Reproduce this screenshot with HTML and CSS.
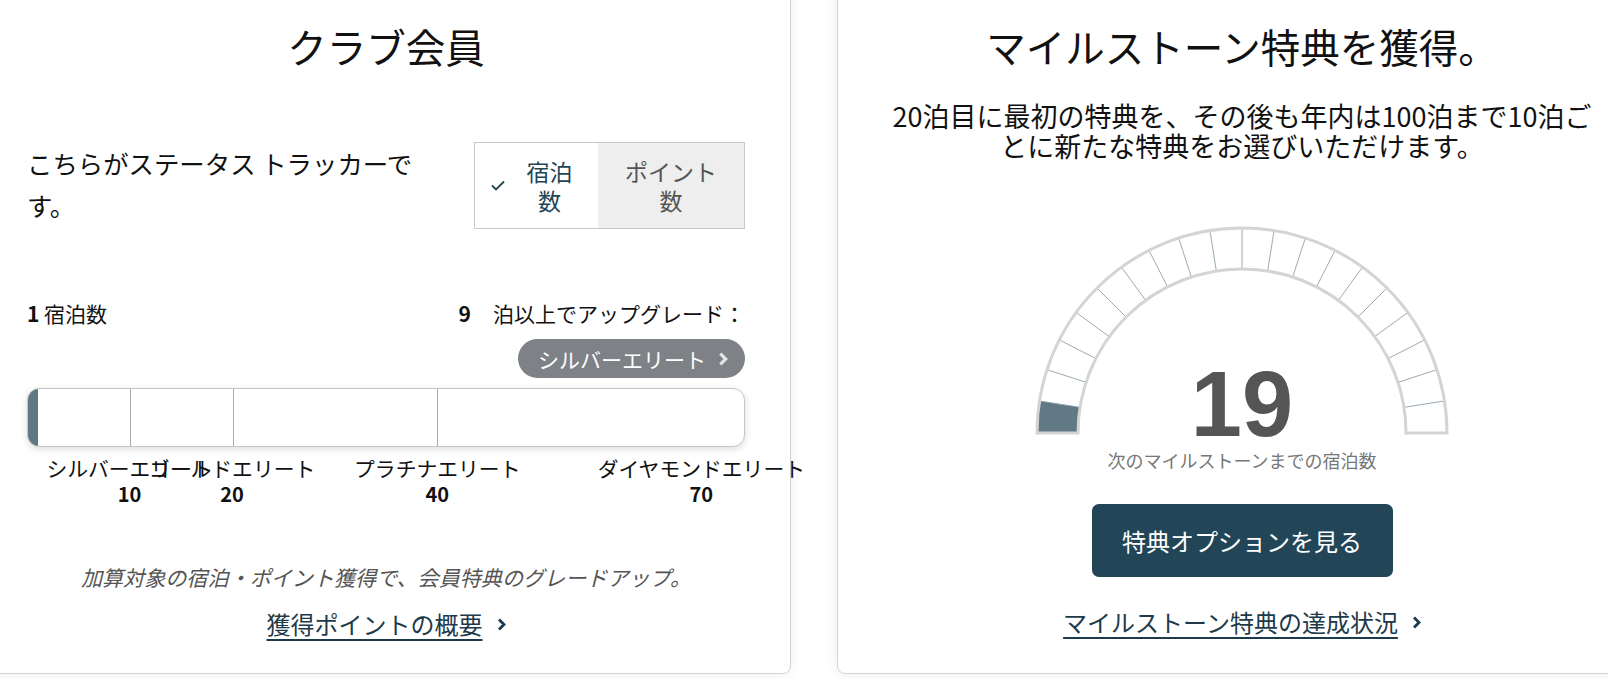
FILE: index.html
```html
<!DOCTYPE html>
<html lang="ja">
<head>
  <meta charset="UTF-8" />
  <meta name="viewport" content="width=device-width, initial-scale=1" />
  <title>クラブ会員</title>
  <link rel="stylesheet" href="styles.css">
</head>
<body>
  <div class="board">
    <!-- status tracker -->
    <section class="card">
      <h2 class="card-title">クラブ会員</h2>

      <div class="intro-row">
        <p class="intro-text">こちらがステータス トラッカーです。</p>
        <div class="toggle">
          <button class="toggle-btn active" type="button">
            <svg class="check" viewBox="0 0 14 11"><path d="M1 5.5l4 4L13 1.5"/></svg>
            <span class="toggle-label stays">宿泊数</span>
          </button>
          <button class="toggle-btn" type="button">
            <span class="toggle-label points">ポイント数</span>
          </button>
        </div>
      </div>

      <div class="stay-row">
        <span><b>1</b> 宿泊数</span>
        <span><b class="need">9</b>泊以上でアップグレード：</span>
      </div>

      <div class="next-tier">
        <a class="tier-pill" href="#">シルバーエリート
          <svg class="chev" viewBox="0 0 8 13"><path d="M1.5 1.5l5 5-5 5"/></svg>
        </a>
      </div>

      <div class="tier-bar">
        <div class="tier-fill" style="width: 1.43%"></div>
        <span class="tier-tick" style="left: 14.29%"></span>
        <span class="tier-tick" style="left: 28.57%"></span>
        <span class="tier-tick" style="left: 57.14%"></span>
      </div>

      <div class="tier-labels">
        <div class="tier-label" style="left: 14.29%"><span>シルバーエリート</span><b>10</b></div>
        <div class="tier-label" style="left: 28.57%"><span>ゴールドエリート</span><b>20</b></div>
        <div class="tier-label" style="left: 57.14%"><span>プラチナエリート</span><b>40</b></div>
        <div class="tier-label last"><span>ダイヤモンドエリート</span><b>70</b></div>
      </div>

      <p class="note">加算対象の宿泊・ポイント獲得で、会員特典のグレードアップ。</p>

      <a class="more-link" href="#">
        <span>獲得ポイントの概要</span>
        <svg class="chev" viewBox="0 0 8 13"><path d="M1.5 1.5l5 5-5 5"/></svg>
      </a>
    </section>

    <!-- milestone rewards -->
    <section class="card">
      <h2 class="card-title">マイルストーン特典を獲得。</h2>
      <p class="lead">20泊目に最初の特典を、その後も年内は100泊まで10泊ごとに新たな特典をお選びいただけます。</p>

      <div class="gauge">
        <svg class="gauge-svg" viewBox="0 0 420 210" width="420" height="210">
          <path class="seg-done" d="M5 207 L46 207 A164 164 0 0 1 48.02 181.35 L7.52 174.93 A205 205 0 0 0 5 207 Z"/>
          <g class="seg-lines">
            <line x1="7.52" y1="174.93" x2="48.02" y2="181.35"/>
            <line x1="15.03" y1="143.65" x2="54.03" y2="156.32"/>
            <line x1="27.34" y1="113.93" x2="63.87" y2="132.55"/>
            <line x1="44.15" y1="86.50" x2="77.32" y2="110.60"/>
            <line x1="65.04" y1="62.04" x2="94.03" y2="91.03"/>
            <line x1="89.50" y1="41.15" x2="113.60" y2="74.32"/>
            <line x1="116.93" y1="24.34" x2="135.55" y2="60.87"/>
            <line x1="146.65" y1="12.03" x2="159.32" y2="51.03"/>
            <line x1="177.93" y1="4.52" x2="184.35" y2="45.02"/>
            <line x1="210" y1="2" x2="210" y2="43"/>
            <line x1="242.07" y1="4.52" x2="235.65" y2="45.02"/>
            <line x1="273.35" y1="12.03" x2="260.68" y2="51.03"/>
            <line x1="303.07" y1="24.34" x2="284.45" y2="60.87"/>
            <line x1="330.50" y1="41.15" x2="306.40" y2="74.32"/>
            <line x1="354.96" y1="62.04" x2="325.97" y2="91.03"/>
            <line x1="375.85" y1="86.50" x2="342.68" y2="110.60"/>
            <line x1="392.66" y1="113.93" x2="356.13" y2="132.55"/>
            <line x1="404.97" y1="143.65" x2="365.97" y2="156.32"/>
            <line x1="412.48" y1="174.93" x2="371.98" y2="181.35"/>
          </g>
          <path class="gauge-rim" d="M5 207 A205 205 0 0 1 415 207 L374 207 A164 164 0 0 0 46 207 Z"/>
        </svg>
        <div class="gauge-value">19</div>
      </div>
      <div class="gauge-caption">次のマイルストーンまでの宿泊数</div>

      <button class="primary-btn" type="button">特典オプションを見る</button>

      <a class="more-link" href="#">
        <span>マイルストーン特典の達成状況</span>
        <svg class="chev" viewBox="0 0 8 13"><path d="M1.5 1.5l5 5-5 5"/></svg>
      </a>
    </section>
  </div>
</body>
</html>
```

FILE: styles.css
```css
html, body {
  margin: 0;
  height: 100%;
  overflow: hidden;
  background: #fff;
  font-family: "Noto Sans CJK JP", "Noto Sans", sans-serif;
  color: #111;
}

.board {
  display: flex;
  gap: 46px;
  margin: -20px 0 0 -19px;
}

.card {
  flex: none;
  width: 810px;
  height: 694px;
  box-sizing: border-box;
  padding: 40px 45px 0;
  border: 1px solid #d3d3d3;
  border-radius: 8px;
  background: #fff;
  box-shadow: 0 0 14px rgba(0, 0, 0, 0.07);
  display: flex;
  flex-direction: column;
  align-items: center;
}

.card-title {
  margin: 0;
  font-size: 39.5px;
  line-height: 50px;
  font-weight: 400;
  text-align: center;
}

/* tracker intro + toggle */
.intro-row {
  align-self: stretch;
  margin-top: 71px;
  display: flex;
  justify-content: space-between;
  align-items: flex-start;
}

.intro-text {
  margin: 0;
  width: 425px;
  font-size: 25.4px;
  line-height: 42px;
}

.toggle {
  display: flex;
  height: 87px;
  box-sizing: border-box;
  border: 1px solid #c8c8c8;
}

.toggle-btn {
  display: flex;
  align-items: center;
  border: none;
  margin: 0;
  font-family: inherit;
  font-size: 23px;
  line-height: 29px;
  background: #eeeeee;
  color: #555;
  padding: 0 26px;
}

.toggle-btn.active {
  background: #fff;
  color: #1f4556;
  padding: 0 25px 0 16px;
}

.check {
  width: 14px;
  height: 11px;
  margin-right: 21px;
  fill: none;
  stroke: #1f4556;
  stroke-width: 1.8;
}

.toggle-label {
  text-align: center;
}

.toggle-label.stays { width: 47px; }
.toggle-label.points { width: 94px; }

/* nights summary */
.stay-row {
  align-self: stretch;
  margin-top: 70px;
  display: flex;
  justify-content: space-between;
  font-size: 21px;
  line-height: 28px;
}

.stay-row b {
  font-weight: 700;
}

.stay-row .need {
  margin-right: 22px;
}

.next-tier {
  align-self: stretch;
  display: flex;
  justify-content: flex-end;
  margin-top: 12px;
}

.tier-pill {
  display: flex;
  align-items: center;
  height: 39px;
  padding: 0 17px 0 20px;
  border-radius: 20px;
  background: #7e8286;
  color: #fff;
  font-size: 21px;
  text-decoration: none;
}

.tier-pill .chev {
  width: 10px;
  height: 14px;
  margin-left: 12px;
  stroke: #e4e4e4;
  stroke-width: 3;
}

.chev {
  width: 9px;
  height: 13px;
  fill: none;
  stroke-width: 2.4;
}

/* tier progress bar */
.tier-bar {
  align-self: stretch;
  position: relative;
  height: 59px;
  margin-top: 10px;
  box-sizing: border-box;
  border: 1px solid #c6c6c6;
  border-radius: 12px;
  overflow: hidden;
  background: #fff;
  box-shadow: 0 2px 7px rgba(0, 0, 0, 0.14);
}

.tier-fill {
  height: 100%;
  background: #607883;
}

.tier-tick {
  position: absolute;
  top: 0;
  bottom: 0;
  width: 1px;
  background: #aaa;
}

.tier-labels {
  align-self: stretch;
  position: relative;
  height: 52px;
  margin-top: 9px;
}

.tier-label {
  position: absolute;
  top: 0;
  transform: translateX(-50%);
  display: flex;
  flex-direction: column;
  align-items: center;
  white-space: nowrap;
  font-size: 20.8px;
  line-height: 25px;
}

.tier-label.last {
  left: auto;
  right: -60px;
  transform: none;
}

.tier-label b {
  font-size: 20px;
}

.note {
  margin: 54px 0 0;
  font-size: 21.1px;
  line-height: 30px;
  font-style: italic;
  color: #555;
}

.more-link {
  margin-top: 15px;
  display: flex;
  align-items: center;
  gap: 14px;
  font-size: 24px;
  line-height: 34px;
  color: #1d3a4a;
  text-decoration: none;
}

.more-link span {
  text-decoration: underline;
  text-underline-offset: 5px;
  text-decoration-thickness: 2px;
}

.more-link .chev {
  stroke: #1d3a4a;
  stroke-width: 2.8;
}

/* milestone gauge */
.lead {
  margin: 30px 0 0;
  max-width: 710px;
  font-size: 27px;
  line-height: 30px;
  text-align: center;
}

.gauge {
  position: relative;
  margin-top: 65px;
  width: 420px;
  height: 210px;
}

.gauge-svg {
  display: block;
}

.seg-done {
  fill: #617984;
}

.seg-lines line {
  stroke: #8fa1ab;
  stroke-width: 0.9;
}

.gauge-rim {
  fill: none;
  stroke: #d4d4d4;
  stroke-width: 3;
}

.gauge-value {
  position: absolute;
  left: 0;
  right: 0;
  bottom: -3px;
  text-align: center;
  font-family: "Liberation Sans", Arial, sans-serif;
  font-weight: 700;
  font-size: 92px;
  line-height: 70px;
  color: #555;
}

.gauge-caption {
  margin-top: 12px;
  font-size: 18px;
  line-height: 24px;
  color: #777;
}

.primary-btn {
  margin-top: 32px;
  width: 301px;
  height: 73px;
  border: none;
  border-radius: 7px;
  background: #224657;
  color: #fff;
  font-family: inherit;
  font-size: 24px;
}

.card .primary-btn + .more-link {
  margin-top: 28px;
}
```
